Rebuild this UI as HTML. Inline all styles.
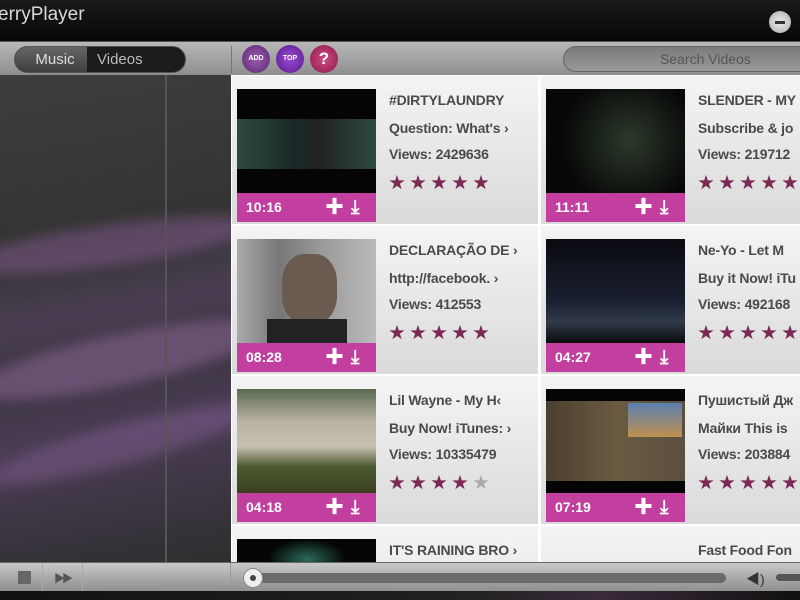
<!DOCTYPE html>
<html><head><meta charset="utf-8"><style>
*{margin:0;padding:0;box-sizing:border-box}
html,body{width:800px;height:600px;overflow:hidden}
body{background:#000;font-family:"Liberation Sans","Noto Sans CJK SC",sans-serif;position:relative}
.title{position:absolute;left:0;top:0;width:800px;height:41px;background:linear-gradient(#1a1a1a,#070707)}
.title span{position:absolute;left:-2px;top:4px;color:#d8d8d8;font-size:19px}
.close{position:absolute;left:769px;top:11px;width:22px;height:22px;border-radius:50%;background:radial-gradient(#eee,#aaa);}
.close:after{content:"";position:absolute;left:6px;top:10px;width:10px;height:3px;background:#333}
.tool{position:absolute;left:0;top:41px;width:800px;height:34px;background:linear-gradient(#b8b8b8,#8e8e8e);border-top:1px solid #555}
.seg{position:absolute;left:14px;top:4px;width:172px;height:27px;border-radius:14px;background:#1c1c1c;overflow:hidden;border:1px solid #555}
.seg .m{position:absolute;left:0;top:0;width:72px;height:27px;background:linear-gradient(#666,#3b3b3b);color:#ddd;font-size:15px;text-align:center;line-height:25px;padding-left:8px}
.seg .v{position:absolute;left:72px;top:0;width:100px;height:27px;color:#bbb;font-size:15px;line-height:25px;padding-left:10px}
.ic{position:absolute;top:3px;width:28px;height:28px;border-radius:50%;color:#fff;font-size:7px;font-weight:bold;text-align:center;line-height:28px}
.search{position:absolute;left:563px;top:4px;width:250px;height:26px;border-radius:13px;background:linear-gradient(#7a7a7a,#9a9a9a);border:1px solid #666;color:#555;font-size:14px;line-height:24px;padding-left:96px}
.left{position:absolute;left:0;top:75px;width:231px;height:487px;overflow:hidden;background:linear-gradient(170deg,#3d3d3d 0%,#333 35%,#4a3f52 48%,#3a3540 58%,#4a3d55 72%,#2e2e2e 100%)}
.left .ln{position:absolute;left:165px;top:0;width:2px;height:487px;background:#555}
.sw{position:absolute;border-radius:50%;filter:blur(6px)}
.content{position:absolute;left:231px;top:75px;width:569px;height:487px;background:#fff;overflow:hidden}
.card{position:absolute;width:306px;height:148px;background:linear-gradient(#f4f4f4,#dadada)}
.card.c2{width:260px}
.th{position:absolute;left:5px;top:13px;width:139px;height:104px;background:#050505;overflow:hidden}
.bar{position:absolute;left:5px;top:117px;width:139px;height:29px;background:#c23f9f;color:#fff;font-weight:bold;font-size:14px;line-height:29px;padding-left:9px}
.bar i{position:absolute;font-style:normal;top:0;font-size:19px}
.t{position:absolute;left:157px;font-weight:bold;color:#4a4a4a;font-size:14px;white-space:nowrap;letter-spacing:-0.2px}
.st{position:absolute;left:157px;top:93px;color:#7a2a55;font-size:16px;letter-spacing:5px}
.bot{position:absolute;left:0;top:562px;width:800px;height:29px;overflow:hidden;background:linear-gradient(#c8c8c8,#8f8f8f);border-top:1px solid #666}
.blk{position:absolute;left:0;top:591px;width:800px;height:9px;background:linear-gradient(90deg,#111,#222 60%,#3a2a3a 75%,#111)}
</style></head><body>
<div class="title"><span>erryPlayer</span><div class="close"></div></div>
<div class="tool">
<div class="seg"><div class="m">Music</div><div class="v">Videos</div></div>
<div style="position:absolute;left:231px;top:4px;width:1px;height:27px;background:#777"></div>
<div class="ic" style="left:242px;background:radial-gradient(#9a5ab0,#5a2a70)">ADD</div>
<div class="ic" style="left:276px;background:radial-gradient(#9a4ad0,#5a1a90)">TOP</div>
<div class="ic" style="left:310px;background:radial-gradient(#d04a80,#8a1a4a);font-size:17px">?</div>
<div class="search">Search Videos</div>
</div>
<div class="left">
<div class="sw" style="left:-40px;top:150px;width:300px;height:40px;background:rgba(170,110,190,.35);transform:rotate(-8deg)"></div>
<div class="sw" style="left:-30px;top:260px;width:300px;height:50px;background:rgba(190,130,200,.35);transform:rotate(-12deg)"></div>
<div class="sw" style="left:-20px;top:350px;width:280px;height:40px;background:rgba(160,110,180,.3);transform:rotate(-15deg)"></div>
<div class="ln"></div></div>
<div class="content">
<div class="card" style="left:1px;top:1px"><div class="th"><div style="position:absolute;left:0;top:30px;width:139px;height:50px;background:linear-gradient(90deg,#2d4a40,#1a2a28 40%,#222 60%,#2c4a40)"></div></div><div class="bar">10:16<i style="left:88px">✚</i><i style="left:114px">⤓</i></div><div class="t" style="top:16px">#DIRTYLAUNDRY</div><div class="t" style="top:44px">Question: What's ›</div><div class="t" style="top:70px">Views: 2429636</div><div class="st">★★★★★</div></div>
<div class="card c2" style="left:310px;top:1px"><div class="th"><div style="position:absolute;left:0;top:0;width:139px;height:104px;background:radial-gradient(circle at 60% 50%,#2c3a2a,#070707 70%)"></div></div><div class="bar">11:11<i style="left:88px">✚</i><i style="left:114px">⤓</i></div><div class="t" style="top:16px">SLENDER - MY</div><div class="t" style="top:44px">Subscribe &amp; jo</div><div class="t" style="top:70px">Views: 219712</div><div class="st">★★★★★</div></div>
<div class="card" style="left:1px;top:151px"><div class="th" style="background:linear-gradient(90deg,#aaa,#777 30%,#999 60%,#bbb)"><div style="position:absolute;left:45px;top:15px;width:55px;height:70px;border-radius:40%;background:#6a5a50"></div><div style="position:absolute;left:30px;top:80px;width:80px;height:24px;background:#222"></div></div><div class="bar">08:28<i style="left:88px">✚</i><i style="left:114px">⤓</i></div><div class="t" style="top:16px">DECLARAÇÃO DE ›</div><div class="t" style="top:44px">http://facebook. ›</div><div class="t" style="top:70px">Views: 412553</div><div class="st">★★★★★</div></div>
<div class="card c2" style="left:310px;top:151px"><div class="th" style="background:linear-gradient(#0a0a10,#1a2030 60%,#303a48 80%,#0a0a0a)"></div><div class="bar">04:27<i style="left:88px">✚</i><i style="left:114px">⤓</i></div><div class="t" style="top:16px">Ne-Yo - Let M</div><div class="t" style="top:44px">Buy it Now! iTu</div><div class="t" style="top:70px">Views: 492168</div><div class="st">★★★★★</div></div>
<div class="card" style="left:1px;top:301px"><div class="th" style="background:linear-gradient(#5a6a50,#b8b0a0 30%,#c8c0b0 55%,#4a5a30 75%,#3a4020)"></div><div class="bar">04:18<i style="left:88px">✚</i><i style="left:114px">⤓</i></div><div class="t" style="top:16px">Lil Wayne - My H‹</div><div class="t" style="top:44px">Buy Now! iTunes: ›</div><div class="t" style="top:70px">Views: 10335479</div><div class="st">★★★★<span style="color:#aaa">★</span></div></div>
<div class="card c2" style="left:310px;top:301px"><div class="th"><div style="position:absolute;left:0;top:12px;width:139px;height:80px;background:linear-gradient(90deg,#4a4030,#6a5a40 50%,#5a5040)"></div><div style="position:absolute;left:82px;top:14px;width:54px;height:34px;background:linear-gradient(#5a80b0,#c09050)"></div></div><div class="bar">07:19<i style="left:88px">✚</i><i style="left:114px">⤓</i></div><div class="t" style="top:16px">Пушистый Дж</div><div class="t" style="top:44px">Майки This is</div><div class="t" style="top:70px">Views: 203884</div><div class="st">★★★★★</div></div>
<div class="card" style="left:1px;top:451px"><div class="th"><div style="position:absolute;left:30px;top:0;width:80px;height:40px;background:radial-gradient(#2a6a5a,#050505 70%)"></div></div><div class="t" style="top:16px">IT'S RAINING BRO ›</div></div>
<div class="card c2" style="left:310px;top:451px"><div class="t" style="top:16px">Fast Food Fon</div></div>
</div>
<div class="bot">
<div style="position:absolute;left:18px;top:8px;width:13px;height:13px;background:#666"></div>
<div style="position:absolute;left:54px;top:7px;color:#555;font-size:11px;letter-spacing:-3px">▶▶</div>
<div style="position:absolute;left:42px;top:0;width:1px;height:28px;background:#aaa"></div>
<div style="position:absolute;left:82px;top:0;width:1px;height:28px;background:#aaa"></div>
<div style="position:absolute;left:230px;top:0;width:1px;height:28px;background:#999"></div>
<div style="position:absolute;left:250px;top:10px;width:476px;height:10px;border-radius:5px;background:#6a6a6a"></div>
<div style="position:absolute;left:243px;top:5px;width:20px;height:20px;border-radius:50%;background:#eee;border:1px solid #888"><div style="position:absolute;left:6px;top:6px;width:6px;height:6px;border-radius:50%;background:#444"></div></div>
<div style="position:absolute;left:746px;top:6px;color:#333;font-size:14px">◀)</div>
<div style="position:absolute;left:776px;top:11px;width:30px;height:7px;border-radius:4px;background:#555"></div>
</div>
<div class="blk"></div>
</body></html>
